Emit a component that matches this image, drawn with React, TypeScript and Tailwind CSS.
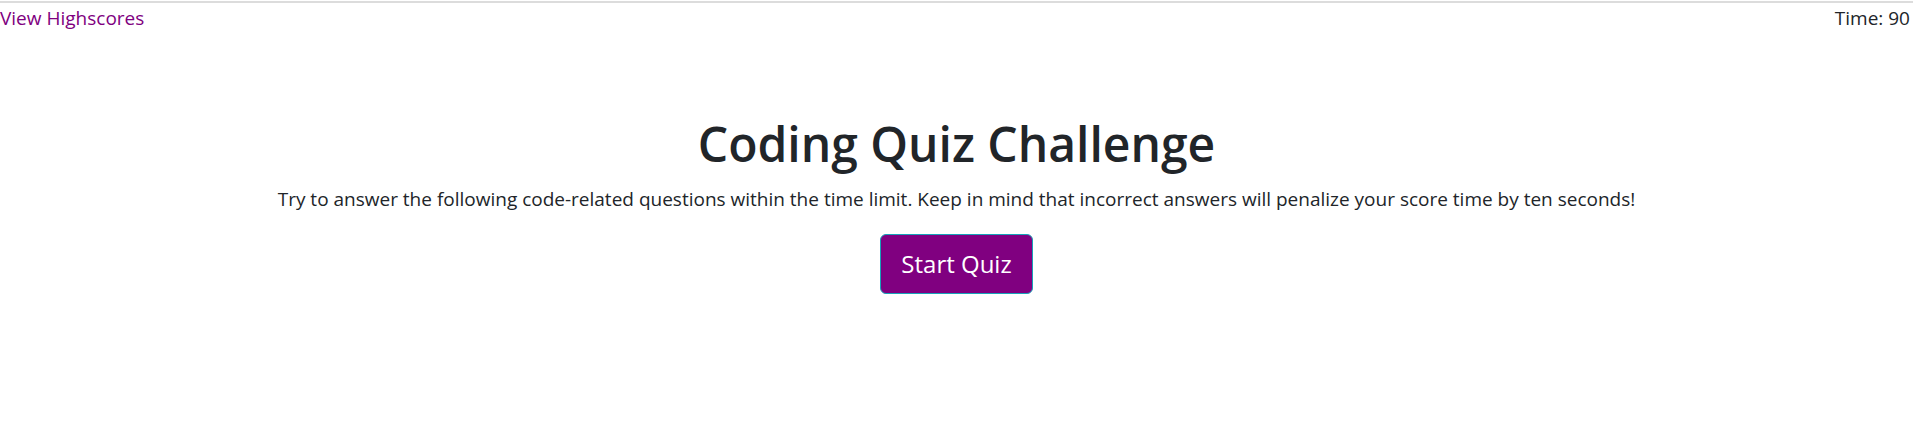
export default function App() {
  return (
    <div className="min-h-screen bg-white text-[#212529] font-['Open_Sans',sans-serif] text-[19px] leading-[30px]">
      <div className="h-[1px]" />
      <div className="h-[2px] bg-[#dcdcdc]" />
      {/* header */}
      <header className="flex items-start justify-between pr-[3px]">
        <a href="#" className="text-[#800080]">View Highscores</a>
        <span>Time: 90</span>
      </header>

      {/* intro */}
      <main className="flex flex-col items-center text-center pt-[81px]">
        <h1 className="text-[48px] leading-[60px] font-semibold">Coding Quiz Challenge</h1>
        <p className="mt-[10px]">
          Try to answer the following code-related questions within the time limit. Keep in mind that incorrect answers will penalize your score time by ten seconds!
        </p>
        <button className="mt-[20px] h-[60px] px-[20px] text-[24px] text-white bg-[#800080] border border-[#17a2b8] rounded-[6px]">
          Start Quiz
        </button>
      </main>
    </div>
  );
}
